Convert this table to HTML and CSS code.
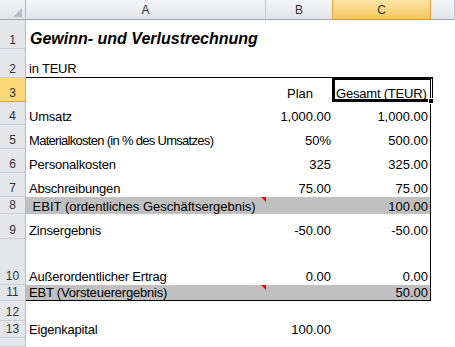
FILE: index.html
```html
<!DOCTYPE html>
<html>
<head>
<meta charset="utf-8">
<link rel="stylesheet" href="styles.css">
</head>
<body>
<div class="sheet">
  <div class="corner"><svg width="9" height="9" viewBox="0 0 9 9"><polygon points="9,0 9,9 0,9" fill="#b9bdc3"/></svg></div>
  <div class="ch">A</div>
  <div class="ch">B</div>
  <div class="ch sel">C</div>
  <div class="ch"></div>

  <div class="rh">1</div>
  <div class="c title">Gewinn- und Verlustrechnung</div>
  <div class="c"></div><div class="c"></div><div class="c"></div>

  <div class="rh">2</div>
  <div class="c bb">in TEUR</div>
  <div class="c bb"></div><div class="c bb"></div><div class="c"></div>

  <div class="rh sel">3</div>
  <div class="c"></div>
  <div class="c num plan">Plan</div>
  <div class="c br">Gesamt (TEUR)</div>
  <div class="c"></div>

  <div class="rh">4</div>
  <div class="c">Umsatz</div>
  <div class="c num">1,000.00</div>
  <div class="c num br">1,000.00</div>
  <div class="c"></div>

  <div class="rh">5</div>
  <div class="c tight">Materialkosten (in % des Umsatzes)</div>
  <div class="c num">50%</div>
  <div class="c num br">500.00</div>
  <div class="c"></div>

  <div class="rh">6</div>
  <div class="c">Personalkosten</div>
  <div class="c num">325</div>
  <div class="c num br">325.00</div>
  <div class="c"></div>

  <div class="rh">7</div>
  <div class="c">Abschreibungen</div>
  <div class="c num">75.00</div>
  <div class="c num br">75.00</div>
  <div class="c"></div>

  <div class="rh">8</div>
  <div class="c gray note wide"> EBIT (ordentliches Geschäftsergebnis)</div>
  <div class="c gray"></div>
  <div class="c num gray br">100.00</div>
  <div class="c"></div>

  <div class="rh">9</div>
  <div class="c">Zinsergebnis</div>
  <div class="c num">-50.00</div>
  <div class="c num br">-50.00</div>
  <div class="c"></div>

  <div class="rh">10</div>
  <div class="c">Außerordentlicher Ertrag</div>
  <div class="c num">0.00</div>
  <div class="c num br">0.00</div>
  <div class="c"></div>

  <div class="rh">11</div>
  <div class="c gray bb note">EBT (Vorsteuerergebnis)</div>
  <div class="c gray bb"></div>
  <div class="c num gray bb br">50.00</div>
  <div class="c"></div>

  <div class="rh">12</div>
  <div class="c"></div><div class="c"></div><div class="c"></div><div class="c"></div>

  <div class="rh">13</div>
  <div class="c">Eigenkapital</div>
  <div class="c num">100.00</div>
  <div class="c"></div><div class="c"></div>

  <div class="rh"></div>
  <div class="c"></div><div class="c"></div><div class="c"></div><div class="c"></div>

  <div class="selection"></div>
  <div class="handle"></div>
</div>
</body>
</html>
```

FILE: styles.css
```css
* { box-sizing: border-box; }
html, body { margin: 0; padding: 0; background: #fff; }
body {
  width: 455px;
  height: 347px;
  overflow: hidden;
  font-family: "Liberation Sans", Arial, sans-serif;
  font-size: 13px;
  color: #000;
}
.sheet {
  position: relative;
  display: grid;
  grid-template-columns: 26px 240px 67px 98px 1fr;
  grid-template-rows: 20px 29px 29px 24px 23px 24px 24px 24px 17px 25px 46px 16px 20px 17px 1fr;
  width: 455px;
  height: 347px;
}
.corner {
  background: linear-gradient(#f3f4f6, #e2e4e8);
  border-right: 1px solid #b4bac3;
  border-bottom: 1px solid #9fa7b2;
  display: flex;
  align-items: flex-end;
  justify-content: flex-end;
  padding: 0 3px 2px 0;
}
.corner svg { display: block; }
.ch {
  background: linear-gradient(#f4f5f7, #e2e4e8);
  border-right: 1px solid #c3c7cd;
  border-bottom: 1px solid #9fa7b2;
  display: flex;
  align-items: center;
  justify-content: center;
  font-size: 12px;
  color: #333;
  padding-top: 1px;
}
.ch.sel {
  background: linear-gradient(#fbe3a6, #f5c75e);
  border-right: 1px solid #e2a340;
  border-left: 1px solid #e2a340;
  border-bottom: 1px solid #d8952b;
  margin-left: -1px;
}
.rh {
  background: #e4e6ea;
  border-right: 1px solid #b4bac3;
  border-bottom: 1px solid #c9cdd3;
  display: flex;
  align-items: flex-end;
  justify-content: center;
  font-size: 12px;
  color: #333;
  padding-bottom: 1px;
  line-height: 14px;
}
.rh.sel {
  background: #fbd878;
  border-right: 1px solid #e2a340;
  border-bottom: 1px solid #e2a340;
}
.c {
  position: relative;
  display: flex;
  align-items: flex-end;
  padding: 0 2px 1px 3px;
  white-space: pre;
  line-height: 15px;
  letter-spacing: -0.2px;
}
.tight { letter-spacing: -0.7px; }
.wide { letter-spacing: 0; }
.num { justify-content: flex-end; letter-spacing: 0; }
.plan { padding-right: 20px; }
.title {
  font-size: 16px;
  font-weight: bold;
  font-style: italic;
  line-height: 18px;
  padding-left: 4px;
  padding-bottom: 1px;
  letter-spacing: 0;
}
.gray { background: #c0c0c0; line-height: 15px; padding-bottom: 0; }
.bb { border-bottom: 1px solid #000; }
.br { border-right: 1px solid #000; }
.note::after {
  content: "";
  position: absolute;
  top: 0;
  right: 0;
  border-top: 5px solid #f00;
  border-left: 5px solid transparent;
}
.selection {
  position: absolute;
  left: 332px;
  top: 77px;
  width: 101px;
  height: 25px;
  border-left: 3px solid #000;
  border-top: 3px solid #000;
  border-bottom: 3px solid #000;
  border-right: 3px double #000;
  pointer-events: none;
}
.handle {
  position: absolute;
  left: 428px;
  top: 98px;
  width: 6px;
  height: 6px;
  background: #000;
  border: 1px solid #fff;
}
```
